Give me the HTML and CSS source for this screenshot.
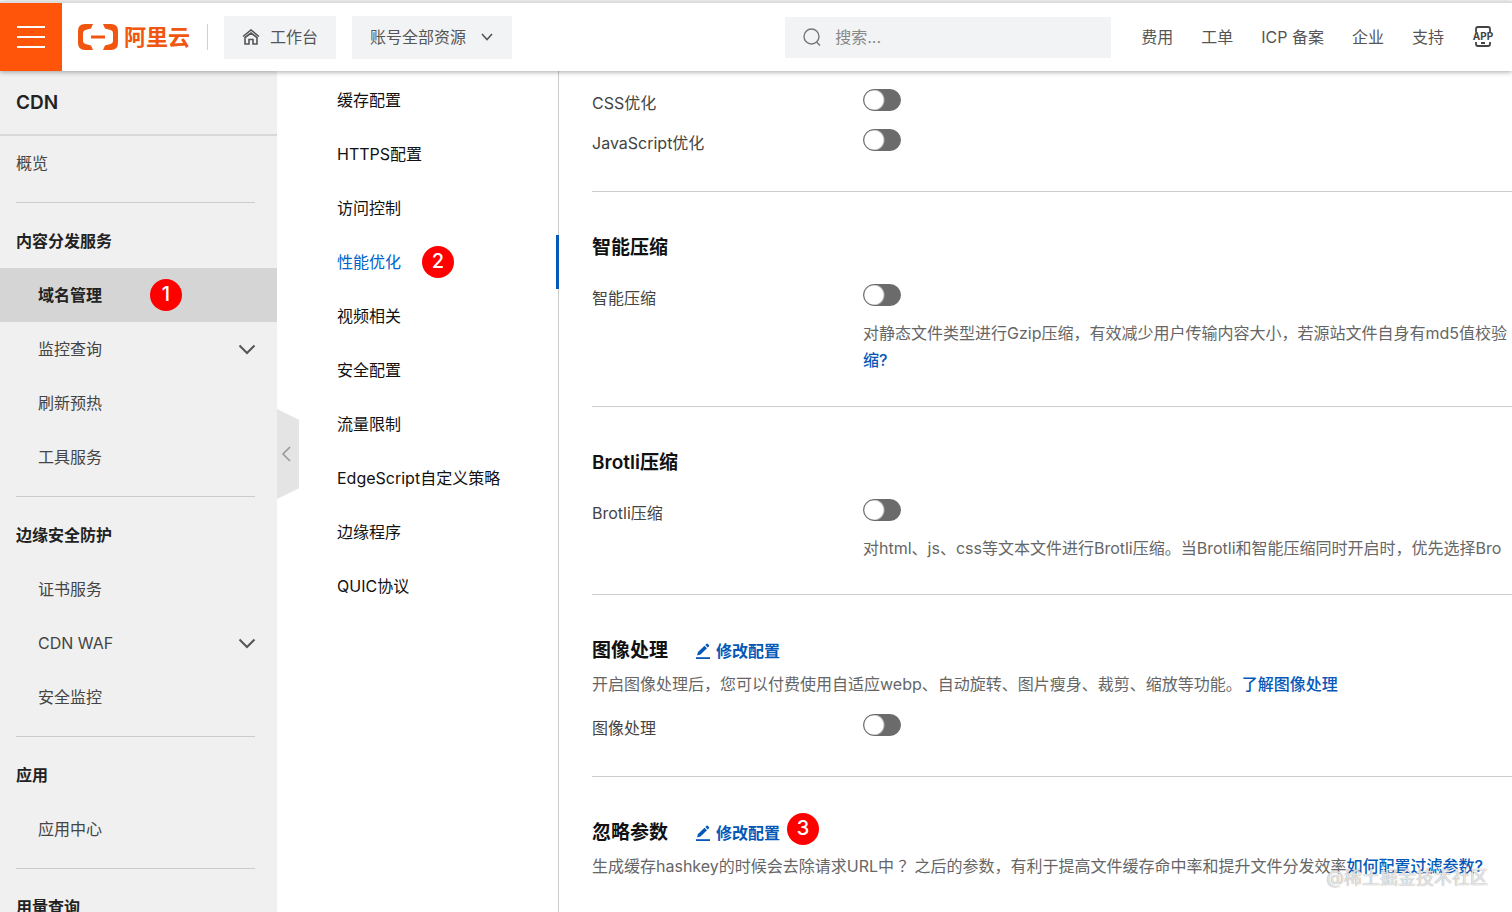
FILE: index.html
```html
<!DOCTYPE html>
<html lang="zh-CN">
<head>
	<meta charset="utf-8">
	<title>CDN 域名管理</title>
	<link rel="stylesheet" href="styles.css">
</head>
<body>

	<header class="topbar">
		<button class="menu" type="button" aria-label="菜单"><span></span><span></span><span></span></button>
		<a class="logo" href="#">
			<svg width="40" height="26" viewBox="0 0 40 26" fill="#f0560f">
				<path d="M15 0H7Q0 0 0 7V19Q0 26 7 26H15L13 21.500L7.500 20Q5 19.300 5 17V9Q5 6.700 7.500 6L13 4.500Z"/>
				<path d="M25 0H33Q40 0 40 7V19Q40 26 33 26H25L27 21.500L32.500 20Q35 19.300 35 17V9Q35 6.700 32.500 6L27 4.500Z"/>
				<path d="M13 11.500H27V14.500H13Z"/>
			</svg>
			<span>阿里云</span>
		</a>
		<a class="workbench" href="#">
			<svg width="18" height="16" viewBox="0 0 18 16" fill="none" stroke="#555" stroke-width="1.600">
				<path d="M1 7.500L9 1L17 7.500"/>
				<path d="M3 8.500V15H7V10.500H11V15H15V8.500L9 4Z"/>
			</svg>
			工作台
		</a>
		<div class="resource">
			<select aria-label="资源范围">
				<option>账号全部资源</option>
			</select>
			<svg width="12" height="8" viewBox="0 0 12 8" fill="none" stroke="#555" stroke-width="1.600"><path d="M1 1L6 6.500L11 1"/></svg>
		</div>
		<div class="search">
			<svg width="18" height="18" viewBox="0 0 18 18" fill="none" stroke="#777" stroke-width="1.400"><circle cx="8.500" cy="8.500" r="7.500"/><path d="M13.500 14L17 17.500"/></svg>
			<input type="text" placeholder="搜索..." aria-label="搜索">
		</div>
		<nav class="links">
			<a href="#">费用</a>
			<a href="#">工单</a>
			<a href="#">ICP 备案</a>
			<a href="#">企业</a>
			<a href="#">支持</a>
			<a class="app" href="#" aria-label="App">
				<svg width="22" height="22" viewBox="0 0 22 22">
					<path d="M4 6V3Q4 1 6 1H16Q18 1 18 3V6M4 16V18Q4 20 6 20H16Q18 20 18 18V16M9 17H13" fill="none" stroke="#444" stroke-width="1.800"/>
					<text class="app-text" x="11" y="14" text-anchor="middle">APP</text>
				</svg>
			</a>
		</nav>
	</header>

	<div class="page">
		<aside class="sidebar">
			<h1>CDN</h1>
			<ul class="group">
				<li><a class="top" href="#">概览</a></li>
			</ul>
			<ul class="group">
				<li class="title">内容分发服务</li>
				<li><a class="current" href="#">域名管理 <span class="badge">1</span></a></li>
				<li><a href="#">监控查询 <svg class="arrow" width="18" height="11" viewBox="0 0 18 11"><path d="M1.500 1.500L9 9L16.500 1.500"/></svg></a></li>
				<li><a href="#">刷新预热</a></li>
				<li><a href="#">工具服务</a></li>
			</ul>
			<ul class="group">
				<li class="title">边缘安全防护</li>
				<li><a href="#">证书服务</a></li>
				<li><a href="#">CDN WAF <svg class="arrow" width="18" height="11" viewBox="0 0 18 11"><path d="M1.500 1.500L9 9L16.500 1.500"/></svg></a></li>
				<li><a href="#">安全监控</a></li>
			</ul>
			<ul class="group">
				<li class="title">应用</li>
				<li><a href="#">应用中心</a></li>
			</ul>
			<ul class="group">
				<li class="title">用量查询</li>
			</ul>
		</aside>

		<nav class="tabs">
			<button class="collapse" type="button" aria-label="收起"><svg width="10" height="16" viewBox="0 0 10 16" fill="none" stroke="#999" stroke-width="1.600"><path d="M9 1L2 8L9 15"/></svg></button>
			<a href="#">缓存配置</a>
			<a href="#">HTTPS配置</a>
			<a href="#">访问控制</a>
			<a class="active" href="#">性能优化 <span class="badge">2</span></a>
			<a href="#">视频相关</a>
			<a href="#">安全配置</a>
			<a href="#">流量限制</a>
			<a href="#">EdgeScript自定义策略</a>
			<a href="#">边缘程序</a>
			<a href="#">QUIC协议</a>
		</nav>

		<main class="main">
			<section>
				<div class="row">
					<label for="css">CSS优化</label>
					<div><input class="switch" type="checkbox" id="css"></div>
				</div>
				<div class="row">
					<label for="js">JavaScript优化</label>
					<div><input class="switch" type="checkbox" id="js"></div>
				</div>
			</section>
			<section>
				<h2>智能压缩</h2>
				<div class="row first">
					<label for="gzip">智能压缩</label>
					<div>
						<input class="switch" type="checkbox" id="gzip">
						<p class="help">对静态文件类型进行Gzip压缩，有效减少用户传输内容大小，若源站文件自身有md5值校验<br><a href="#">缩?</a></p>
					</div>
				</div>
			</section>
			<section>
				<h2>Brotli压缩</h2>
				<div class="row first">
					<label for="brotli">Brotli压缩</label>
					<div>
						<input class="switch" type="checkbox" id="brotli">
						<p class="help">对html、js、css等文本文件进行Brotli压缩。当Brotli和智能压缩同时开启时，优先选择Bro</p>
					</div>
				</div>
			</section>
			<section>
				<h2>图像处理
					<a class="edit" href="#"><svg width="16" height="16" viewBox="0 0 16 16" fill="#0558b8"><path d="M1 14.200H15V16H1Z"/><path d="M2 12.500L3 9L9.500 2.800L12 5.300L5.500 11.500Z"/><path d="M10.300 2L11.500 0.800Q12.200 0.300 12.900 0.900L13.900 1.900Q14.500 2.600 13.900 3.300L12.800 4.500Z"/></svg>修改配置</a>
				</h2>
				<p class="desc">开启图像处理后，您可以付费使用自适应webp、自动旋转、图片瘦身、裁剪、缩放等功能。<a href="#">了解图像处理</a></p>
				<div class="row">
					<label for="image">图像处理</label>
					<div><input class="switch" type="checkbox" id="image"></div>
				</div>
			</section>
			<section>
				<h2>忽略参数
					<a class="edit" href="#"><svg width="16" height="16" viewBox="0 0 16 16" fill="#0558b8"><path d="M1 14.200H15V16H1Z"/><path d="M2 12.500L3 9L9.500 2.800L12 5.300L5.500 11.500Z"/><path d="M10.300 2L11.500 0.800Q12.200 0.300 12.900 0.900L13.900 1.900Q14.500 2.600 13.900 3.300L12.800 4.500Z"/></svg>修改配置<span class="badge over">3</span></a>
				</h2>
				<p class="desc">生成缓存hashkey的时候会去除请求URL中 ？之后的参数，有利于提高文件缓存命中率和提升文件分发效率<a href="#">如何配置过滤参数?</a></p>
			</section>
		</main>
	</div>

	<div class="watermark">@稀土掘金技术社区</div>

</body>
</html>
```
FILE: styles.css
```css
*{
	box-sizing: border-box;
}

body{
	margin: 0;
	padding-top: 1px;
	height: 100vh;
	overflow: hidden;
	position: relative;
	display: flex;
	flex-direction: column;
	background: #fff;
	color: #333;
	font: 16px/28px Inter, "Noto Sans CJK SC", sans-serif;
}

a{
	color: #0558b8;
	text-decoration: none;
}

ul, p, h1, h2{
	margin: 0;
	padding: 0;
	list-style: none;
}

svg{
	display: block;
	flex: none;
}

button, input, select{
	font: inherit;
	border: 0;
	padding: 0;
	margin: 0;
}

/* top bar */
.topbar{
	display: flex;
	align-items: center;
	flex: none;
	height: 70px;
	padding-right: 18px;
	border-top: 2px solid #dcdedd;
	background: #fff;
	box-shadow: 0 1px 5px rgba(0,0,0,.35);
	z-index: 2;
}

.menu{
	display: flex;
	flex-direction: column;
	align-items: center;
	justify-content: center;
	gap: 8px;
	align-self: stretch;
	width: 62px;
	background: #ff550a;
}

.menu span{
	width: 28px;
	height: 2px;
	background: #fff;
}

.logo{
	display: flex;
	align-items: center;
	gap: 6px;
	margin-left: 16px;
	padding-right: 17px;
	height: 26px;
	border-right: 1px solid #d0d0d0;
	color: #f0560f;
	font-size: 22px;
	font-weight: 700;
}

.workbench, .resource, .search{
	display: flex;
	align-items: center;
	height: 43px;
	background: #f1f3f5;
	color: #555;
}

.workbench{
	gap: 10px;
	margin-left: 16px;
	padding: 0 18px;
}

.resource{
	position: relative;
	width: 160px;
	margin-left: 16px;
}

.resource select{
	appearance: none;
	width: 100%;
	height: 100%;
	padding: 0 18px;
	background: none;
	color: #555;
}

.resource svg{
	position: absolute;
	right: 19px;
	pointer-events: none;
}

.search{
	width: 326px;
	height: 41px;
	margin-left: auto;
	padding-left: 18px;
	gap: 14px;
}

.search input{
	flex: 1;
	min-width: 0;
	background: none;
}

.search input::placeholder{
	color: #888;
}

.links{
	display: flex;
	align-items: center;
	gap: 28px;
	margin-left: 30px;
}

.links a{
	color: #555;
}

.app svg{
	overflow: visible;
}

.app-text{
	font: 700 10px Inter, sans-serif;
	fill: #444;
}

.page{
	display: flex;
	flex: 1;
	min-height: 0;
}

/* left menu */
.sidebar{
	flex: none;
	width: 277px;
	overflow: hidden;
	background: #f0f0f0;
}

.sidebar h1{
	padding-left: 16px;
	border-bottom: 2px solid #d8d8d8;
	color: #222;
	font-size: 19px;
	font-weight: 600;
	line-height: 63px;
}

.group::after{
	content: "";
	display: block;
	height: 1px;
	margin: 12px 22px 11px 16px;
	background: #ccc;
}

.group .title{
	padding-left: 16px;
	color: #222;
	font-weight: 700;
	line-height: 54px;
}

.group a{
	display: flex;
	align-items: center;
	height: 54px;
	padding: 0 21px 0 38px;
	color: #444;
}

.group a.top{
	padding-left: 16px;
}

.group a.current{
	background: #d5d5d5;
	color: #222;
	font-weight: 700;
}

.arrow{
	margin-left: auto;
	fill: none;
	stroke: #555;
	stroke-width: 2;
}

.badge{
	display: flex;
	align-items: center;
	justify-content: center;
	width: 32px;
	height: 32px;
	padding-bottom: 2px;
	border-radius: 50%;
	background: #f00;
	color: #fff;
	font-size: 20px;
	font-weight: 500;
}

.current .badge{
	margin-left: 48px;
}

/* config tabs */
.tabs{
	position: relative;
	flex: none;
	width: 282px;
	padding-top: 2px;
	border-right: 1px solid #ccc;
}

.tabs a{
	display: flex;
	align-items: center;
	gap: 21px;
	height: 54px;
	margin-right: -1px;
	padding-left: 60px;
	color: #111;
}

.tabs a.active{
	border-right: 3px solid #0558b8;
	color: #0064c8;
}

.collapse{
	position: absolute;
	left: 0;
	top: 338px;
	display: flex;
	align-items: center;
	width: 22px;
	height: 90px;
	padding-left: 4px;
	background: #e4e4e4;
	clip-path: polygon(0 0, 100% 12%, 100% 88%, 0 100%);
}

/* settings */
.main{
	flex: 1;
	min-width: 0;
	padding-left: 33px;
	overflow: hidden;
	white-space: nowrap;
}

.main section{
	padding: 42px 0 22px;
	border-bottom: 1px solid #ccc;
}

.main section:first-child{
	padding-top: 18px;
}

.main section:last-child{
	border-bottom: 0;
}

.main h2{
	display: flex;
	align-items: center;
	gap: 27px;
	color: #111;
	font-size: 19px;
	font-weight: 600;
	line-height: 28px;
}

.edit{
	position: relative;
	display: flex;
	align-items: center;
	gap: 5px;
	font-size: 16px;
}

.over{
	position: absolute;
	left: 92px;
	top: -6px;
}

.row{
	display: flex;
	align-items: flex-start;
	min-height: 40px;
}

.row label{
	flex: none;
	width: 271px;
	color: #444;
}

.first{
	margin-top: 22px;
}

.switch{
	appearance: none;
	display: block;
	width: 38px;
	height: 22px;
	border: 1px solid #6b6b6b;
	border-radius: 11px;
	background: radial-gradient(circle at 10px 10px, #fff 9px, #6b6b6b 11px);
}

.switch:checked{
	background: radial-gradient(circle at 26px 10px, #fff 9px, #0558b8 11px);
}

.help, .desc{
	color: #666;
	line-height: 27px;
}

.help{
	margin: 14px 0 10px;
}

.desc{
	margin: 6px 0 16px;
}

.help a, .desc a{
	font-weight: 500;
}

.watermark{
	position: absolute;
	right: 24px;
	bottom: 20px;
	color: rgba(255,255,255,.8);
	font-size: 18px;
	text-shadow: 0 0 1px #777;
	z-index: 3;
}
```
